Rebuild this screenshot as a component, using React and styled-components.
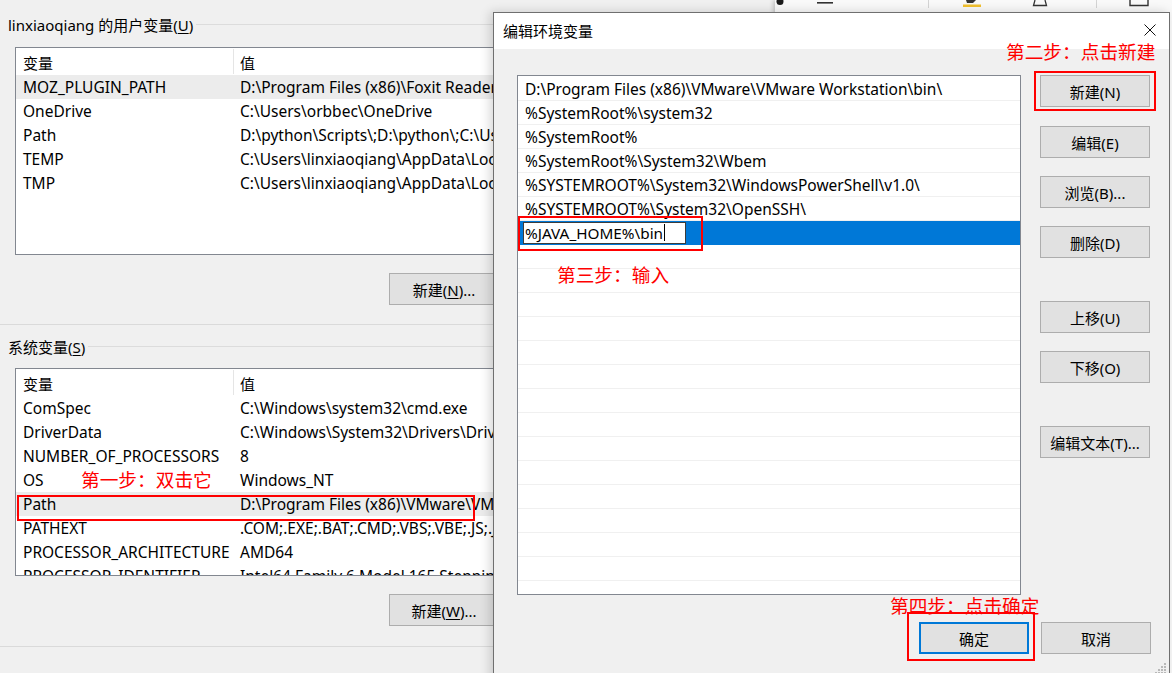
import React from "react";
import styled, { createGlobalStyle, css } from "styled-components";

const FONT = `"Noto Sans", "Noto Sans CJK SC", sans-serif`;
const CJK = `"Noto Sans CJK SC", "Noto Sans", sans-serif`;

const GlobalStyle = createGlobalStyle`
  html, body { margin: 0; padding: 0; background: #f0f0f0; }
  body { font-family: ${FONT}; }
  * { box-sizing: border-box; }
`;

const Screen = styled.div`
  position: relative;
  width: 1172px;
  height: 673px;
  overflow: hidden;
  background: #f0f0f0;
  font-family: ${FONT};
  font-size: 15px;
  color: #000;
`;

/* ---------- background window (left) ---------- */
const EnvWindow = styled.div`
  display: flex;
  flex-direction: column;
  width: 760px;
  padding-top: 13px;
`;

const GroupTitle = styled.div`
  display: flex;
  align-items: center;
  height: 22px;
  padding-left: 8px;
  margin-top: ${(p) => p.$mt || 0}px;
  white-space: nowrap;
  &::after {
    content: "";
    flex: 1;
    height: 1px;
    background: #dcdcdc;
    margin-left: 3px;
  }
`;

const Mn = styled.span`
  text-decoration: underline;
  text-underline-offset: 2px;
`;

const ListView = styled.div`
  margin: ${(p) => p.$mt}px 0 0 15px;
  width: 482px;
  height: 208px;
  border: 1px solid #828790;
  background: #fff;
  overflow: hidden;
`;

const ListHeader = styled.div`
  display: grid;
  grid-template-columns: 217px 1fr;
  height: 27px;
  align-items: stretch;
`;

const HeaderCell = styled.div`
  display: flex;
  align-items: center;
  padding: 2px 0 0 7px;
  & + & {
    border-left: 1px solid #e5e5e5;
    padding-left: 6px;
    margin: 1px 0;
  }
`;

const ListRow = styled.div`
  display: grid;
  grid-template-columns: 217px 1fr;
  height: 24px;
  align-items: center;
  font-size: 15.5px;
  background: ${(p) => (p.$selected ? "#ececec" : "#fff")};
  white-space: nowrap;
`;

const ListCell = styled.div`
  padding-left: 7px;
  overflow: hidden;
`;

const Button = styled.button`
  width: 110px;
  height: 32px;
  padding: 0;
  margin: 0;
  background: #e1e1e1;
  border: 1px solid #adadad;
  font-family: ${FONT};
  font-size: 15px;
  color: #000;
  white-space: nowrap;
  ${(p) =>
    p.$default &&
    css`
      border: 2px solid #0078d7;
    `}
`;

const WindowButton = styled(Button)`
  margin: ${(p) => p.$mt}px 0 0 389px;
`;

const Separator = styled.div`
  height: 1px;
  background: #dadada;
  margin-top: ${(p) => p.$mt}px;
`;

/* ---------- other window behind the dialog (top right) ---------- */
const BackWindow = styled.div`
  position: absolute;
  left: 775px;
  top: 0;
  width: 397px;
  height: 673px;
  background: #f9f9f9;
  box-shadow: -2px 0 4px rgba(0, 0, 0, 0.18);
`;

const Toolbar = styled.div`
  display: flex;
  align-items: flex-start;
  height: 12px;
  padding-left: 1px;
  overflow: hidden;
`;

const ToolIcon = styled.svg`
  flex: none;
  margin-left: ${(p) => p.$ml || 0}px;
`;

const ToolSep = styled.div`
  flex: none;
  width: 1px;
  height: 8px;
  background: #d4d4d4;
  margin-left: ${(p) => p.$ml}px;
`;

/* ---------- dialog ---------- */
const Dialog = styled.div`
  position: absolute;
  left: 493px;
  top: 12px;
  width: 677px;
  height: 672px;
  border: 1px solid #6f6f6f;
  background: #f0f0f0;
  box-shadow: -3px 0 10px rgba(0, 0, 0, 0.16);
  display: flex;
  flex-direction: column;
`;

const TitleBar = styled.div`
  height: 36px;
  background: #fff;
  display: flex;
  align-items: center;
  justify-content: space-between;
  padding-left: 9px;
  padding-right: 13px;
  padding-bottom: 2px;
  font-family: ${CJK};
  font-size: 15px;
`;

const DialogBody = styled.div`
  display: flex;
  flex-direction: column;
  padding: 26px 18px 0 23px;
`;

const MainRow = styled.div`
  display: flex;
  gap: 19px;
`;

const PathList = styled.div`
  width: 504px;
  height: 520px;
  border: 1px solid #828790;
  background: #fff;
  padding-top: 1px;
  overflow: hidden;
  flex: none;
`;

const PathRow = styled.div`
  height: 24px;
  border-bottom: 1px solid ${(p) => (p.$selected ? "#0078d7" : "#f0f0f0")};
  background: ${(p) => (p.$selected ? "#0078d7" : "#fff")};
  display: flex;
  align-items: center;
  padding-left: ${(p) => (p.$selected ? 5 : 7)}px;
  font-size: 15.5px;
  white-space: nowrap;
`;

const EditBox = styled.div`
  width: 163px;
  height: 22px;
  background: #fff;
  border: 1px solid #3c3c3c;
  display: flex;
  align-items: center;
  padding-left: 1px;
  font-size: 15.3px;
`;

const Caret = styled.span`
  display: inline-block;
  width: 1px;
  height: 17px;
  background: #000;
  margin-left: 1px;
`;

const ButtonColumn = styled.div`
  display: flex;
  flex-direction: column;
`;

const SideButton = styled(Button)`
  margin-top: ${(p) => p.$mt || 0}px;
`;

const BottomRow = styled.div`
  display: flex;
  justify-content: flex-end;
  gap: 12px;
  margin-top: 27px;
`;

const Grip = styled.svg`
  position: absolute;
  right: 2px;
  top: 649px;
`;

/* ---------- red annotations ---------- */
const Note = styled.div`
  position: absolute;
  left: ${(p) => p.$x}px;
  top: ${(p) => p.$y}px;
  font-family: ${CJK};
  font-size: 18.7px;
  line-height: 24px;
  color: #ff0000;
  white-space: nowrap;
`;

const RedBox = styled.div`
  position: absolute;
  left: ${(p) => p.$x}px;
  top: ${(p) => p.$y}px;
  width: ${(p) => p.$w}px;
  height: ${(p) => p.$h}px;
  border: 2px solid #ff0000;
`;

const userVars = [
  ["MOZ_PLUGIN_PATH", "D:\\Program Files (x86)\\Foxit Reader\\plugins\\"],
  ["OneDrive", "C:\\Users\\orbbec\\OneDrive"],
  ["Path", "D:\\python\\Scripts\\;D:\\python\\;C:\\Users\\linxiaoqiang\\AppData"],
  ["TEMP", "C:\\Users\\linxiaoqiang\\AppData\\Local\\Temp"],
  ["TMP", "C:\\Users\\linxiaoqiang\\AppData\\Local\\Temp"],
];

const sysVars = [
  ["ComSpec", "C:\\Windows\\system32\\cmd.exe"],
  ["DriverData", "C:\\Windows\\System32\\Drivers\\DriverData"],
  ["NUMBER_OF_PROCESSORS", "8"],
  ["OS", "Windows_NT"],
  ["Path", "D:\\Program Files (x86)\\VMware\\VMware Workstation\\bin\\;"],
  ["PATHEXT", ".COM;.EXE;.BAT;.CMD;.VBS;.VBE;.JS;.JSE;.WSF;.WSH;.MSC"],
  ["PROCESSOR_ARCHITECTURE", "AMD64"],
  ["PROCESSOR_IDENTIFIER", "Intel64 Family 6 Model 165 Stepping 5, GenuineIntel"],
];

const paths = [
  "D:\\Program Files (x86)\\VMware\\VMware Workstation\\bin\\",
  "%SystemRoot%\\system32",
  "%SystemRoot%",
  "%SystemRoot%\\System32\\Wbem",
  "%SYSTEMROOT%\\System32\\WindowsPowerShell\\v1.0\\",
  "%SYSTEMROOT%\\System32\\OpenSSH\\",
];

function VarList({ rows, selected, mt }) {
  return (
    <ListView $mt={mt}>
      <ListHeader>
        <HeaderCell>变量</HeaderCell>
        <HeaderCell>值</HeaderCell>
      </ListHeader>
      {rows.map(([k, v]) => (
        <ListRow key={k} $selected={k === selected}>
          <ListCell>{k}</ListCell>
          <ListCell>{v}</ListCell>
        </ListRow>
      ))}
    </ListView>
  );
}

export default function App() {
  const emptyRows = Array.from({ length: 16 });
  return (
    <>
      <GlobalStyle />
      <Screen>
        <EnvWindow>
          <GroupTitle>
            <span>
              linxiaoqiang 的用户变量(<Mn>U</Mn>)
            </span>
          </GroupTitle>
          <VarList rows={userVars} selected="MOZ_PLUGIN_PATH" mt={12} />
          <WindowButton $mt={18}>
            新建(<Mn>N</Mn>)...
          </WindowButton>
          <Separator $mt={19} />
          <GroupTitle $mt={10}>
            <span>
              系统变量(<Mn>S</Mn>)
            </span>
          </GroupTitle>
          <VarList rows={sysVars} selected="Path" mt={11} />
          <WindowButton $mt={18}>
            新建(<Mn>W</Mn>)...
          </WindowButton>
          <Separator $mt={20} />
        </EnvWindow>

        <BackWindow>
          <Toolbar>
            <ToolIcon width="8" height="6" viewBox="0 0 8 6">
              <circle cx="4" cy="1.5" r="3.5" fill="#1a1a1a" />
            </ToolIcon>
            <ToolIcon $ml={33} width="16" height="6" viewBox="0 0 16 6">
              <rect x="0" y="2" width="16" height="1.6" fill="#333" />
            </ToolIcon>
            <ToolSep $ml={95} />
            <ToolIcon $ml={34} width="18" height="8" viewBox="0 0 18 8">
              <path d="M3 0 L13 0 L10 3 L4 3 Z" fill="#333" />
              <rect x="0" y="4.5" width="18" height="2.5" fill="#f2c12e" />
            </ToolIcon>
            <ToolIcon $ml={51} width="16" height="8" viewBox="0 0 16 8">
              <path d="M3 0 L1.5 5.5 L14.5 5.5 L13 0" fill="none" stroke="#333" strokeWidth="1.3" />
            </ToolIcon>
            <ToolSep $ml={48} />
            <ToolIcon $ml={32} width="20" height="8" viewBox="0 0 20 8">
              <path d="M1 0 L1 5.5 L19 5.5 L19 0" fill="none" stroke="#333" strokeWidth="1.4" />
            </ToolIcon>
          </Toolbar>
        </BackWindow>

        <Dialog>
          <TitleBar>
            <span>编辑环境变量</span>
            <svg width="12" height="12" viewBox="0 0 12 12">
              <path d="M0.5 0.5 L11.5 11.5 M11.5 0.5 L0.5 11.5" stroke="#111" strokeWidth="1" />
            </svg>
          </TitleBar>
          <DialogBody>
            <MainRow>
              <PathList>
                {paths.map((p) => (
                  <PathRow key={p}>{p}</PathRow>
                ))}
                <PathRow $selected>
                  <EditBox>
                    %JAVA_HOME%\bin
                    <Caret />
                  </EditBox>
                </PathRow>
                {emptyRows.map((_, i) => (
                  <PathRow key={"e" + i} />
                ))}
              </PathList>
              <ButtonColumn>
                <SideButton>新建(N)</SideButton>
                <SideButton $mt={19}>编辑(E)</SideButton>
                <SideButton $mt={18}>浏览(B)...</SideButton>
                <SideButton $mt={18}>删除(D)</SideButton>
                <SideButton $mt={43}>上移(U)</SideButton>
                <SideButton $mt={18}>下移(O)</SideButton>
                <SideButton $mt={43}>编辑文本(T)...</SideButton>
              </ButtonColumn>
            </MainRow>
            <BottomRow>
              <Button $default>确定</Button>
              <Button>取消</Button>
            </BottomRow>
          </DialogBody>
          <Grip width="12" height="12" viewBox="0 0 12 12">
            <g fill="#b8b8b8">
              <rect x="9" y="1" width="2" height="2" />
              <rect x="6" y="4" width="2" height="2" />
              <rect x="9" y="4" width="2" height="2" />
              <rect x="3" y="7" width="2" height="2" />
              <rect x="6" y="7" width="2" height="2" />
              <rect x="9" y="7" width="2" height="2" />
              <rect x="0" y="10" width="2" height="2" />
              <rect x="3" y="10" width="2" height="2" />
              <rect x="6" y="10" width="2" height="2" />
              <rect x="9" y="10" width="2" height="2" />
            </g>
          </Grip>
        </Dialog>

        <Note $x={81} $y={467}>第一步：双击它</Note>
        <Note $x={1006} $y={39}>第二步：点击新建</Note>
        <Note $x={557} $y={262}>第三步：输入</Note>
        <Note $x={890} $y={593}>第四步：点击确定</Note>

        <RedBox $x={17} $y={495} $w={458} $h={26} />
        <RedBox $x={518} $y={216} $w={185} $h={35} />
        <RedBox $x={1034} $y={71} $w={122} $h={40} />
        <RedBox $x={907} $y={612} $w={128} $h={49} />
      </Screen>
    </>
  );
}
